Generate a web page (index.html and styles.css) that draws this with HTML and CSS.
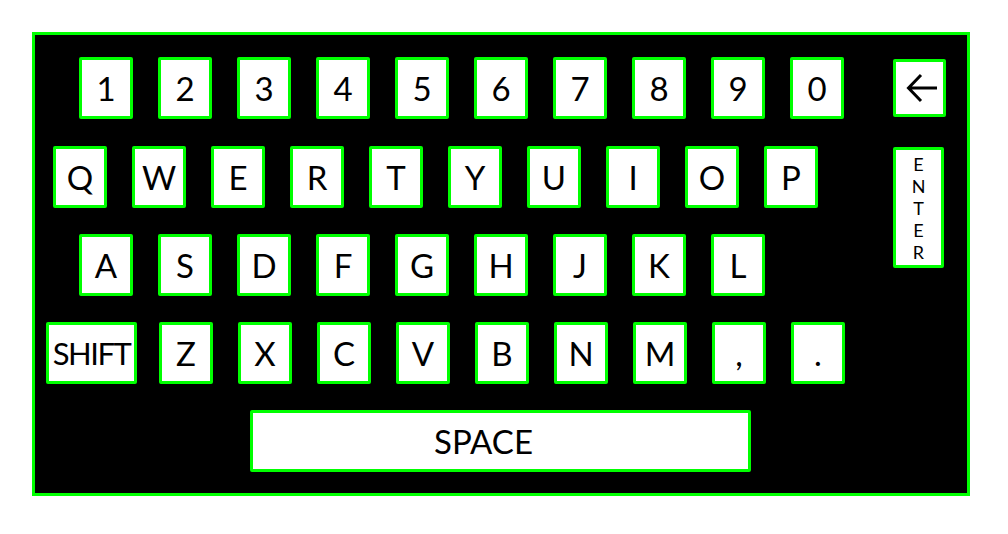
FILE: index.html
```html
<!DOCTYPE html>
<html lang="en">
<head>
  <meta charset="UTF-8">
  <title>On-screen Keyboard</title>
  <link rel="stylesheet" href="styles.css">
</head>
<body>
  <div class="keyboard">
    <div class="main">
      <div class="row row-num">
        <div class="key">1</div>
        <div class="key">2</div>
        <div class="key">3</div>
        <div class="key">4</div>
        <div class="key">5</div>
        <div class="key">6</div>
        <div class="key">7</div>
        <div class="key">8</div>
        <div class="key">9</div>
        <div class="key">0</div>
      </div>
      <div class="row row-top">
        <div class="key">Q</div>
        <div class="key">W</div>
        <div class="key">E</div>
        <div class="key">R</div>
        <div class="key">T</div>
        <div class="key">Y</div>
        <div class="key">U</div>
        <div class="key">I</div>
        <div class="key">O</div>
        <div class="key">P</div>
      </div>
      <div class="row row-home">
        <div class="key">A</div>
        <div class="key">S</div>
        <div class="key">D</div>
        <div class="key">F</div>
        <div class="key">G</div>
        <div class="key">H</div>
        <div class="key">J</div>
        <div class="key">K</div>
        <div class="key">L</div>
      </div>
      <div class="row row-bottom">
        <div class="key shift">SHIFT</div>
        <div class="key">Z</div>
        <div class="key">X</div>
        <div class="key">C</div>
        <div class="key">V</div>
        <div class="key">B</div>
        <div class="key">N</div>
        <div class="key">M</div>
        <div class="key">,</div>
        <div class="key">.</div>
      </div>
      <div class="row row-space">
        <div class="key space">SPACE</div>
      </div>
    </div>

    <div class="side">
      <div class="key back">
        <svg width="32" height="30" viewBox="0 0 32 30">
          <path d="M31 15 H3 M15 2 L2.5 15 L15 28" fill="none" stroke="#000" stroke-width="3"/>
        </svg>
      </div>
      <div class="key enter">
        <span>E</span>
        <span>N</span>
        <span>T</span>
        <span>E</span>
        <span>R</span>
      </div>
    </div>
  </div>
</body>
</html>
```

FILE: styles.css
```css
body {
  margin: 0;
  background-color: #fff;
}

.keyboard {
  box-sizing: border-box;
  margin: 32px 0 0 32px;
  width: 938px;
  height: 464px;
  border: 3px solid #00ff00;
  background-color: #000;
  display: flex;
  padding-top: 22px;
}

.main {
  width: 811px;
  display: flex;
  flex-direction: column;
  gap: 26px;
}

.row {
  display: flex;
  gap: 25px;
}

.row-num {
  margin-left: 44px;
}

.row-top {
  margin-left: 18px;
  margin-top: 1px;
}

.row-home {
  margin-left: 44px;
}

.row-bottom {
  margin-left: 11px;
}

.row-space {
  margin-left: 215px;
}

.key {
  box-sizing: border-box;
  width: 54px;
  height: 62px;
  border: 3px solid #00ff00;
  border-radius: 2px;
  background-color: #fff;
  display: flex;
  align-items: center;
  justify-content: center;
  font-family: Lato, "Open Sans", sans-serif;
  font-size: 33px;
  color: #000;
}

.shift {
  width: 91px;
  margin-right: -3px;
  font-size: 31px;
  letter-spacing: -1.5px;
}

.space {
  width: 501px;
  padding-right: 34px;
}

.side {
  margin-left: 47px;
  display: flex;
  flex-direction: column;
  align-items: flex-start;
}

.back {
  width: 53px;
  height: 58px;
  margin-top: 2px;
  padding-left: 4px;
}

.enter {
  width: 51px;
  height: 121px;
  margin-top: 30px;
  flex-direction: column;
  font-size: 18px;
  line-height: 22px;
}
```
